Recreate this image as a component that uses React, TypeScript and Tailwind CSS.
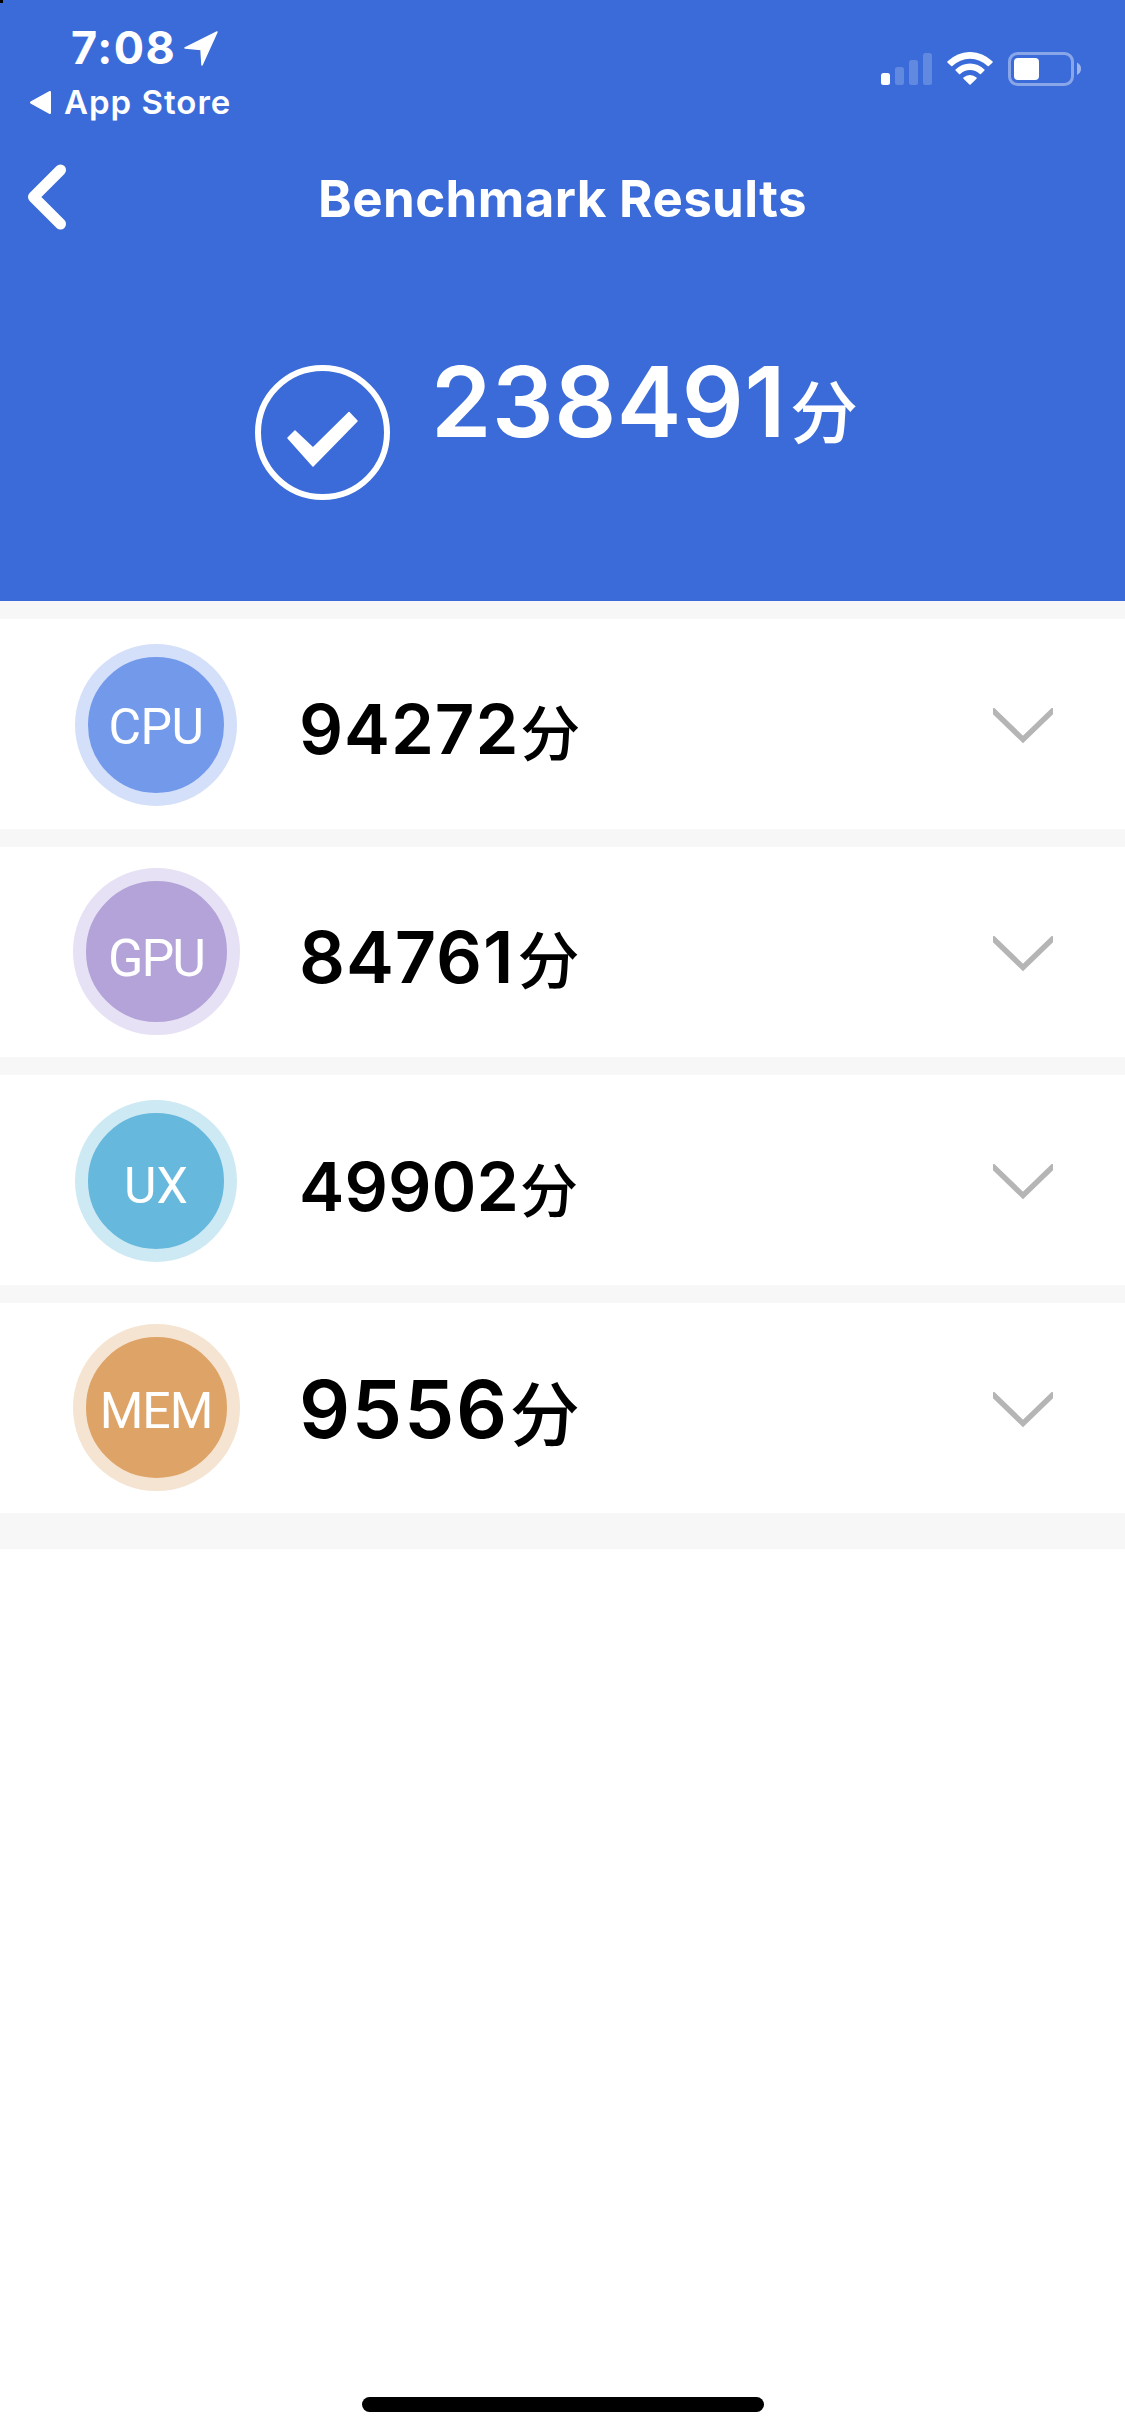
import clsx from "clsx";

type Score = {
  label: string;
  value: string;
  badge: string;
  labelStyle: string;
  valueStyle: string;
  unitStyle: string;
};

const scores: Score[] = [
  {
    label: "CPU",
    value: "94272",
    badge: "mt-[25px] size-[162px] border-[13px] border-[#d4dffa] bg-[#7399eb]",
    labelStyle: "text-[50px] pt-1 tracking-[-0.5px]",
    valueStyle: "text-[69px] mt-[76px] tracking-[0.9px]",
    unitStyle: "text-[60px] ml-px mt-[81px]",
  },
  {
    label: "GPU",
    value: "84761",
    badge: "mt-[21px] size-[167px] border-[13px] border-[#e6e1f4] bg-[#b3a3d9]",
    labelStyle: "text-[52px] pt-3.5 tracking-[-2px]",
    valueStyle: "text-[72px] mt-[74px] tracking-[0.9px]",
    unitStyle: "text-[62px] ml-[3px] mt-[79px]",
  },
  {
    label: "UX",
    value: "49902",
    badge: "mt-[25px] size-[162px] border-[13px] border-[#cce9f4] bg-[#66b8dd]",
    labelStyle: "text-[50px] pt-2.5",
    valueStyle: "text-[68px] mt-[77px] tracking-[0.1px]",
    unitStyle: "text-[58px] ml-px mt-[83px]",
  },
  {
    label: "MEM",
    value: "9556",
    badge: "mt-[21px] size-[167px] border-[13px] border-[#f5e4d1] bg-[#dea367]",
    labelStyle: "text-[50px] pt-1.5 tracking-[-1px]",
    valueStyle: "text-[80px] mt-[66px] tracking-[1.7px]",
    unitStyle: "text-[70px] ml-px mt-[73px]",
  },
];

function StatusBar() {
  return (
    <div className="flex h-[126px] justify-between">
      <div className="flex flex-col pl-[28px] pt-[24px] font-semibold">
        <div className="flex h-[46px] items-center pl-[43px]">
          <span className="pt-px text-[45px] leading-[46px] font-bold tracking-[1.5px]">7:08</span>
          <svg className="ml-[7px]" width="36" height="38" viewBox="0 0 36 38" fill="#fff" stroke="#fff" strokeWidth="1.5" strokeLinejoin="round">
            <path d="M34 4 2 20 18 21.500 19 37Z" />
          </svg>
        </div>
        <div className="mt-[12px] flex h-[40px] items-center">
          <svg width="24" height="26" viewBox="0 0 24 26" fill="#fff" stroke="#fff" strokeWidth="2" strokeLinejoin="round">
            <path d="M3 13.500 22 3V24Z" />
          </svg>
          <span className="ml-[12px] text-[33px] leading-[40px] tracking-[1px]">App Store</span>
        </div>
      </div>

      <div className="flex items-start pt-[52px] pr-[43px]">
        <svg width="52" height="34" viewBox="0 0 52 34" fill="#fff">
          <rect x="0" y="21" width="9" height="12" rx="2.5" />
          <g opacity="0.2">
            <rect x="14" y="15" width="9" height="18" rx="2.5" />
            <rect x="28" y="8" width="9" height="25" rx="2.5" />
            <rect x="42" y="1" width="9" height="32" rx="2.5" />
          </g>
        </svg>
        <svg className="ml-[14px]" width="46" height="34" viewBox="0 0 46 34" fill="#fff">
          <path d="M.6 9.3a31.6 31.6 0 0 1 44.8 0q.7.7 0 1.4L41.800 14q-.6.6-1.200 0a25 25 0 0 0-35.200 0q-.6.6-1.200 0L.6 10.700q-.7-.7 0-1.400Z" />
          <path d="M8.600 17.400a20.400 20.400 0 0 1 28.800 0q.6.6 0 1.200L34 22q-.6.6-1.200 0a14 14 0 0 0-19.600 0q-.6.6-1.200 0L8.600 18.600q-.6-.6 0-1.200Z" />
          <path d="M16.500 25.500a9.500 9.500 0 0 1 13 0q.7.6 0 1.300L23.600 32.500q-.6.6-1.200 0L16.500 26.800q-.7-.7 0-1.300Z" />
        </svg>
        <svg className="ml-[15px]" width="74" height="34" viewBox="0 0 74 34" fill="#fff">
          <rect x="1.500" y="1.500" width="63" height="31" rx="8" fill="none" stroke="#fff" strokeOpacity="0.4" strokeWidth="3" />
          <rect x="6" y="6" width="25" height="22" rx="4" />
          <path d="M69 10.500q4 2 4 6.250t-4 6.250Z" opacity="0.5" />
        </svg>
      </div>
    </div>
  );
}

function ScoreRow({ score }: { score: Score }) {
  return (
    <div className="flex h-[210px] bg-white">
      <div className="ml-[72px] flex w-[168px] items-start justify-center">
        <div className={clsx("flex shrink-0 items-center justify-center rounded-full", score.badge)}>
          <span className={clsx("font-['Roboto',sans-serif] leading-none text-white", score.labelStyle)}>{score.label}</span>
        </div>
      </div>
      <div className="ml-[59px] flex flex-1 items-start text-black">
        <span className={clsx("leading-none font-semibold", score.valueStyle)}>{score.value}</span>
        <span className={clsx("font-['Noto_Sans_CJK_SC',sans-serif] leading-none font-medium", score.unitStyle)}>分</span>
      </div>
      <svg className="mt-[89px] mr-[72px]" width="60" height="36" viewBox="0 0 60 36" fill="none" stroke="#b5b5b5" strokeWidth="5.500">
        <path d="M-1 1.500 30 31.500 61 1.500" />
      </svg>
    </div>
  );
}

export default function App() {
  return (
    <div className="relative flex h-[2436px] w-[1125px] flex-col overflow-hidden bg-white font-['Inter',sans-serif]">
      <div className="absolute top-0 left-0 size-[3px] bg-black" />

      <header className="flex h-[601px] flex-col bg-[#3b6bd9] text-white">
        <StatusBar />
        <div className="flex h-[144px] items-center">
          <svg className="-mt-[3px] ml-[26px]" width="42" height="68" viewBox="0 0 42 68" fill="none" stroke="#fff" strokeWidth="11" strokeLinecap="round" strokeLinejoin="round">
            <path d="M34.500 7 7.500 34 34.500 61" />
          </svg>
          <h1 className="flex-1 pr-[68px] text-center text-[51px] leading-none font-[750] tracking-[0.4px]">Benchmark Results</h1>
        </div>
        <div className="flex items-start pt-[95px] pl-[255px]">
          <svg width="135" height="135" viewBox="0 0 135 135" fill="none">
            <circle cx="67.500" cy="67.500" r="64.500" stroke="#fff" strokeWidth="6" />
            <path d="M33 73 40 66 58 83 94 47.500 102 56 58 101Z" fill="#fff" stroke="#fff" strokeWidth="1.500" strokeLinejoin="round" />
          </svg>
          <span className="-mt-[12px] ml-[41px] text-[97px] leading-none font-[560] tracking-[0.5px]">238491</span>
          <span className="mt-[10px] ml-[4px] font-['Noto_Sans_CJK_SC',sans-serif] text-[68px] leading-none font-medium">分</span>
        </div>
      </header>

      <main className="flex flex-col gap-[18px] bg-[#f7f7f7] pt-[18px] pb-[36px]">
        {scores.map((score) => (
          <ScoreRow key={score.label} score={score} />
        ))}
      </main>

      <div className="mt-auto mb-[24px] h-[15px] w-[402px] self-center rounded-full bg-black" />
    </div>
  );
}
